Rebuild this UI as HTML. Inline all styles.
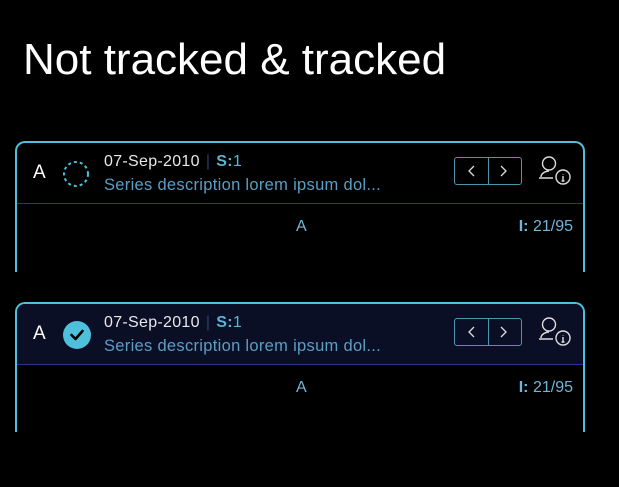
<!DOCTYPE html><html><head><style>
body{margin:0;width:619px;height:487px;background:#000;font-family:"Liberation Sans",sans-serif;position:relative;overflow:hidden}
.t{position:absolute;left:23px;top:35px;color:#fff;font-size:44px;letter-spacing:0px}
.card{position:absolute;left:15px;width:566px;border:2px solid #4fc0dc;border-bottom:none;border-radius:10px 10px 0 0}
.hd{height:60px;border-bottom:1.5px solid #2d3394;position:relative;border-radius:8px 8px 0 0}
.bd{position:relative;height:60px}
.a{position:absolute;left:16px;top:19px;color:#fff;font-size:19px}
.d{position:absolute;left:87px;top:10px;color:#e8e8e8;font-size:16px;letter-spacing:0.3px}
.d b{color:#5bb4d6;font-weight:bold}
.d i{color:#2d3e6a;font-style:normal;margin:0 6px}
.s{position:absolute;left:87px;top:33px;color:#5b9ec4;font-size:16.5px;letter-spacing:0.3px}
.nav{position:absolute;left:437px;top:14px;width:66px;height:26px;border:1.5px solid #4c97b0;border-radius:3px}
.nav:after{content:"";position:absolute;left:33px;top:0;height:26px;border-left:1.5px solid #4c97b0}
.ic{position:absolute;left:520px;top:10px}
.mid{position:absolute;left:279px;top:14px;color:#6eb7da;font-size:16px}
.i{position:absolute;right:10px;top:14px;color:#6eb7da;font-size:16px}
</style></head><body>
<div class="t">Not tracked &amp; tracked</div>

<div class="card" style="top:141px;height:129px">
<div class="hd">
<div class="a">A</div>
<svg style="position:absolute;left:45px;top:17px" width="28" height="28"><circle cx="14" cy="14" r="12" fill="none" stroke="#4fc0dc" stroke-width="2" stroke-dasharray="3 3"/></svg>
<div class="d">07-Sep-2010<i>|</i><b>S:</b><span style="color:#5bb4d6">1</span></div>
<div class="s">Series description lorem ipsum dol...</div>
<div class="nav"><svg width="66" height="26"><path d="M19 8l-5 5 5 5M46 8l5 5-5 5" stroke="#ddd" fill="none" stroke-width="1.3"/></svg></div>
<svg class="ic" width="36" height="36"><path d="M4 24c0-4 5-6 8-6M12 4a5 5 0 0 1 0 13a5 5 0 0 1 0-13zM2 25h14" stroke="#ddd" fill="none" stroke-width="1.4"/><circle cx="26" cy="24" r="7" stroke="#ddd" fill="none" stroke-width="1.4"/><path d="M26 21v.5M26 23v5M24.5 28h3" stroke="#ddd" stroke-width="1.4"/></svg>
</div>
<div class="bd"><div class="mid">A</div><div class="i"><b>I:</b> 21/95</div></div>
</div>

<div class="card" style="top:302px;height:128px">
<div class="hd" style="background:#0b0f26">
<div class="a">A</div>
<svg style="position:absolute;left:45px;top:16px" width="30" height="30"><circle cx="15" cy="15" r="14" fill="#4fc0dc"/><path d="M9.5 15l4 4 7-8" stroke="#000" fill="none" stroke-width="2.6" stroke-linecap="round" stroke-linejoin="round"/></svg>
<div class="d">07-Sep-2010<i>|</i><b>S:</b><span style="color:#5bb4d6">1</span></div>
<div class="s">Series description lorem ipsum dol...</div>
<div class="nav"><svg width="66" height="26"><path d="M19 8l-5 5 5 5M46 8l5 5-5 5" stroke="#ddd" fill="none" stroke-width="1.3"/></svg></div>
<svg class="ic" width="36" height="36"><path d="M4 24c0-4 5-6 8-6M12 4a5 5 0 0 1 0 13a5 5 0 0 1 0-13zM2 25h14" stroke="#ddd" fill="none" stroke-width="1.4"/><circle cx="26" cy="24" r="7" stroke="#ddd" fill="none" stroke-width="1.4"/><path d="M26 21v.5M26 23v5M24.5 28h3" stroke="#ddd" stroke-width="1.4"/></svg>
</div>
<div class="bd"><div class="mid">A</div><div class="i"><b>I:</b> 21/95</div></div>
</div>
</body></html>
